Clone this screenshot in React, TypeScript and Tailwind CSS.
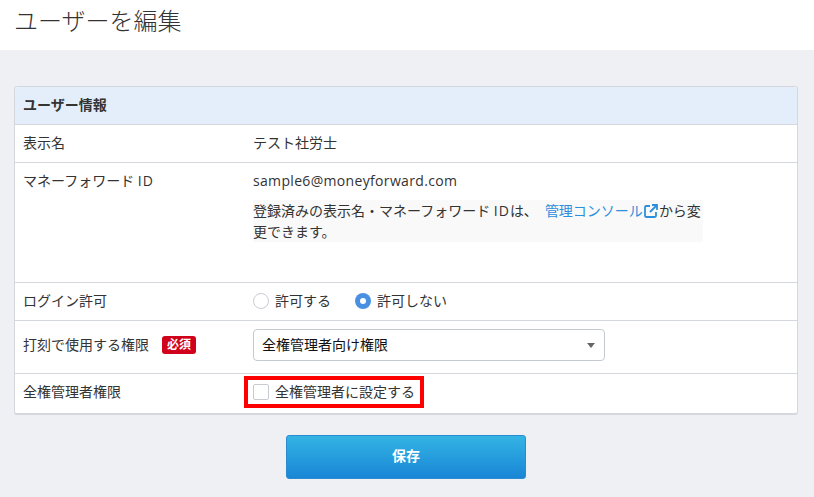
const font = "font-['Open_Sans','Noto_Sans_CJK_JP',sans-serif]";

function Row({ label, badge, className, children }: { label: React.ReactNode; badge?: boolean; className: string; children: React.ReactNode }) {
  return (
    <div className={`flex border-t border-[#d5d7de] ${className}`}>
      <div className="w-[238px] shrink-0 pl-2 flex items-start gap-[13px]">
        <span>{label}</span>
        {badge && (
          <span className="bg-[#d0021b] text-white text-[12px] leading-[18px] h-[18px] px-[5px] rounded-[3px] font-bold mt-[1px]">必須</span>
        )}
      </div>
      <div className="flex-1 min-w-0">{children}</div>
    </div>
  );
}

export default function App() {
  return (
    <div className={`${font} w-[814px] h-[497px] overflow-hidden bg-[#eff0f4] text-[14px] leading-[20px] text-[#333]`}>
      <div className="h-[50px] bg-white pl-[14px] pt-[4px] text-[24px] leading-[34px] font-light text-[#333]">ユーザーを編集</div>

      <div className="mx-[14px] mt-[36px] w-[784px] h-[329px] bg-white border border-[#d5d7de] border-b-[2px] rounded-[3px]">
        <div className="h-[37px] bg-[#e4eefb] pl-2 pt-[8px] font-bold rounded-t-[3px] text-[#333]">ユーザー情報</div>

        <Row label="表示名" className="h-[38px] pt-[8px]">テスト社労士</Row>

        <Row label={<>マネーフォワード <span className="tracking-[1px]">ID</span></>} className="h-[120px] pt-[8px]">
          <div className="tracking-[0.33px]">sample6@moneyforward.com</div>
          <div className="mt-[9px] w-[450px] h-[42px] bg-[#f9f9f9] leading-[21px]">
            登録済みの表示名・マネーフォワード <span className="tracking-[1px]">ID</span>は、
            <span className="text-[#2b8fdc] ml-[7px]">管理コンソール</span>
            <svg className="inline-block w-[14px] h-[14px] mx-[1px] align-[-2px] text-[#2b8fdc]" viewBox="0 0 14 14" fill="none" stroke="currentColor" strokeWidth="1.8">
              <path d="M6 2H2.2A1.2 1.2 0 0 0 1 3.2v8.6A1.2 1.2 0 0 0 2.2 13h8.6a1.2 1.2 0 0 0 1.2-1.2V8" />
              <path d="M8 1h5v5M13 1 6 8" />
            </svg>
            から変更できます。
          </div>
        </Row>

        <Row label="ログイン許可" className="h-[38px] pt-[8px]">
          <div className="flex items-center h-[20px]">
            <span className="w-4 h-4 rounded-full bg-white border border-[#c8ccd2]" />
            <span className="ml-[6px]">許可する</span>
            <span className="ml-[24px] w-4 h-4 rounded-full bg-[#4a90e2] flex items-center justify-center">
              <span className="w-[6px] h-[6px] rounded-full bg-white" />
            </span>
            <span className="ml-[6px]">許可しない</span>
          </div>
        </Row>

        <Row label="打刻で使用する権限" badge className="h-[53px] pt-[8px] [&>div:first-child]:pt-[6px]">
          <div className="relative w-[352px] h-[32px] border border-[#c5cad0] rounded-[4px] pl-2 leading-[30px] text-[#111]">
            全権管理者向け権限
            <span className="absolute right-[9px] top-[13px] w-0 h-0 border-x-[4px] border-x-transparent border-t-[5px] border-t-[#666]" />
          </div>
        </Row>

        <Row label="全権管理者権限" className="h-[40px] pt-[8px]">
          <div className="relative flex items-center h-[20px]">
            <span className="w-4 h-4 rounded-[2px] bg-white border border-[#c8ccd2]" />
            <span className="ml-[6px]">全権管理者に設定する</span>
            <span className="absolute left-[-9px] top-[-6px] w-[180px] h-[32px] border-[4px] border-[#ff0000]" />
          </div>
        </Row>
      </div>

      <div className="flex justify-center mt-[20px] pr-[2px]">
        <button className="w-[240px] h-[44px] rounded-[3px] border border-[#2a8bd0] bg-gradient-to-b from-[#34b4e4] to-[#1a86d6] text-white font-bold text-[14px] pb-[3px]">保存</button>
      </div>
    </div>
  );
}
